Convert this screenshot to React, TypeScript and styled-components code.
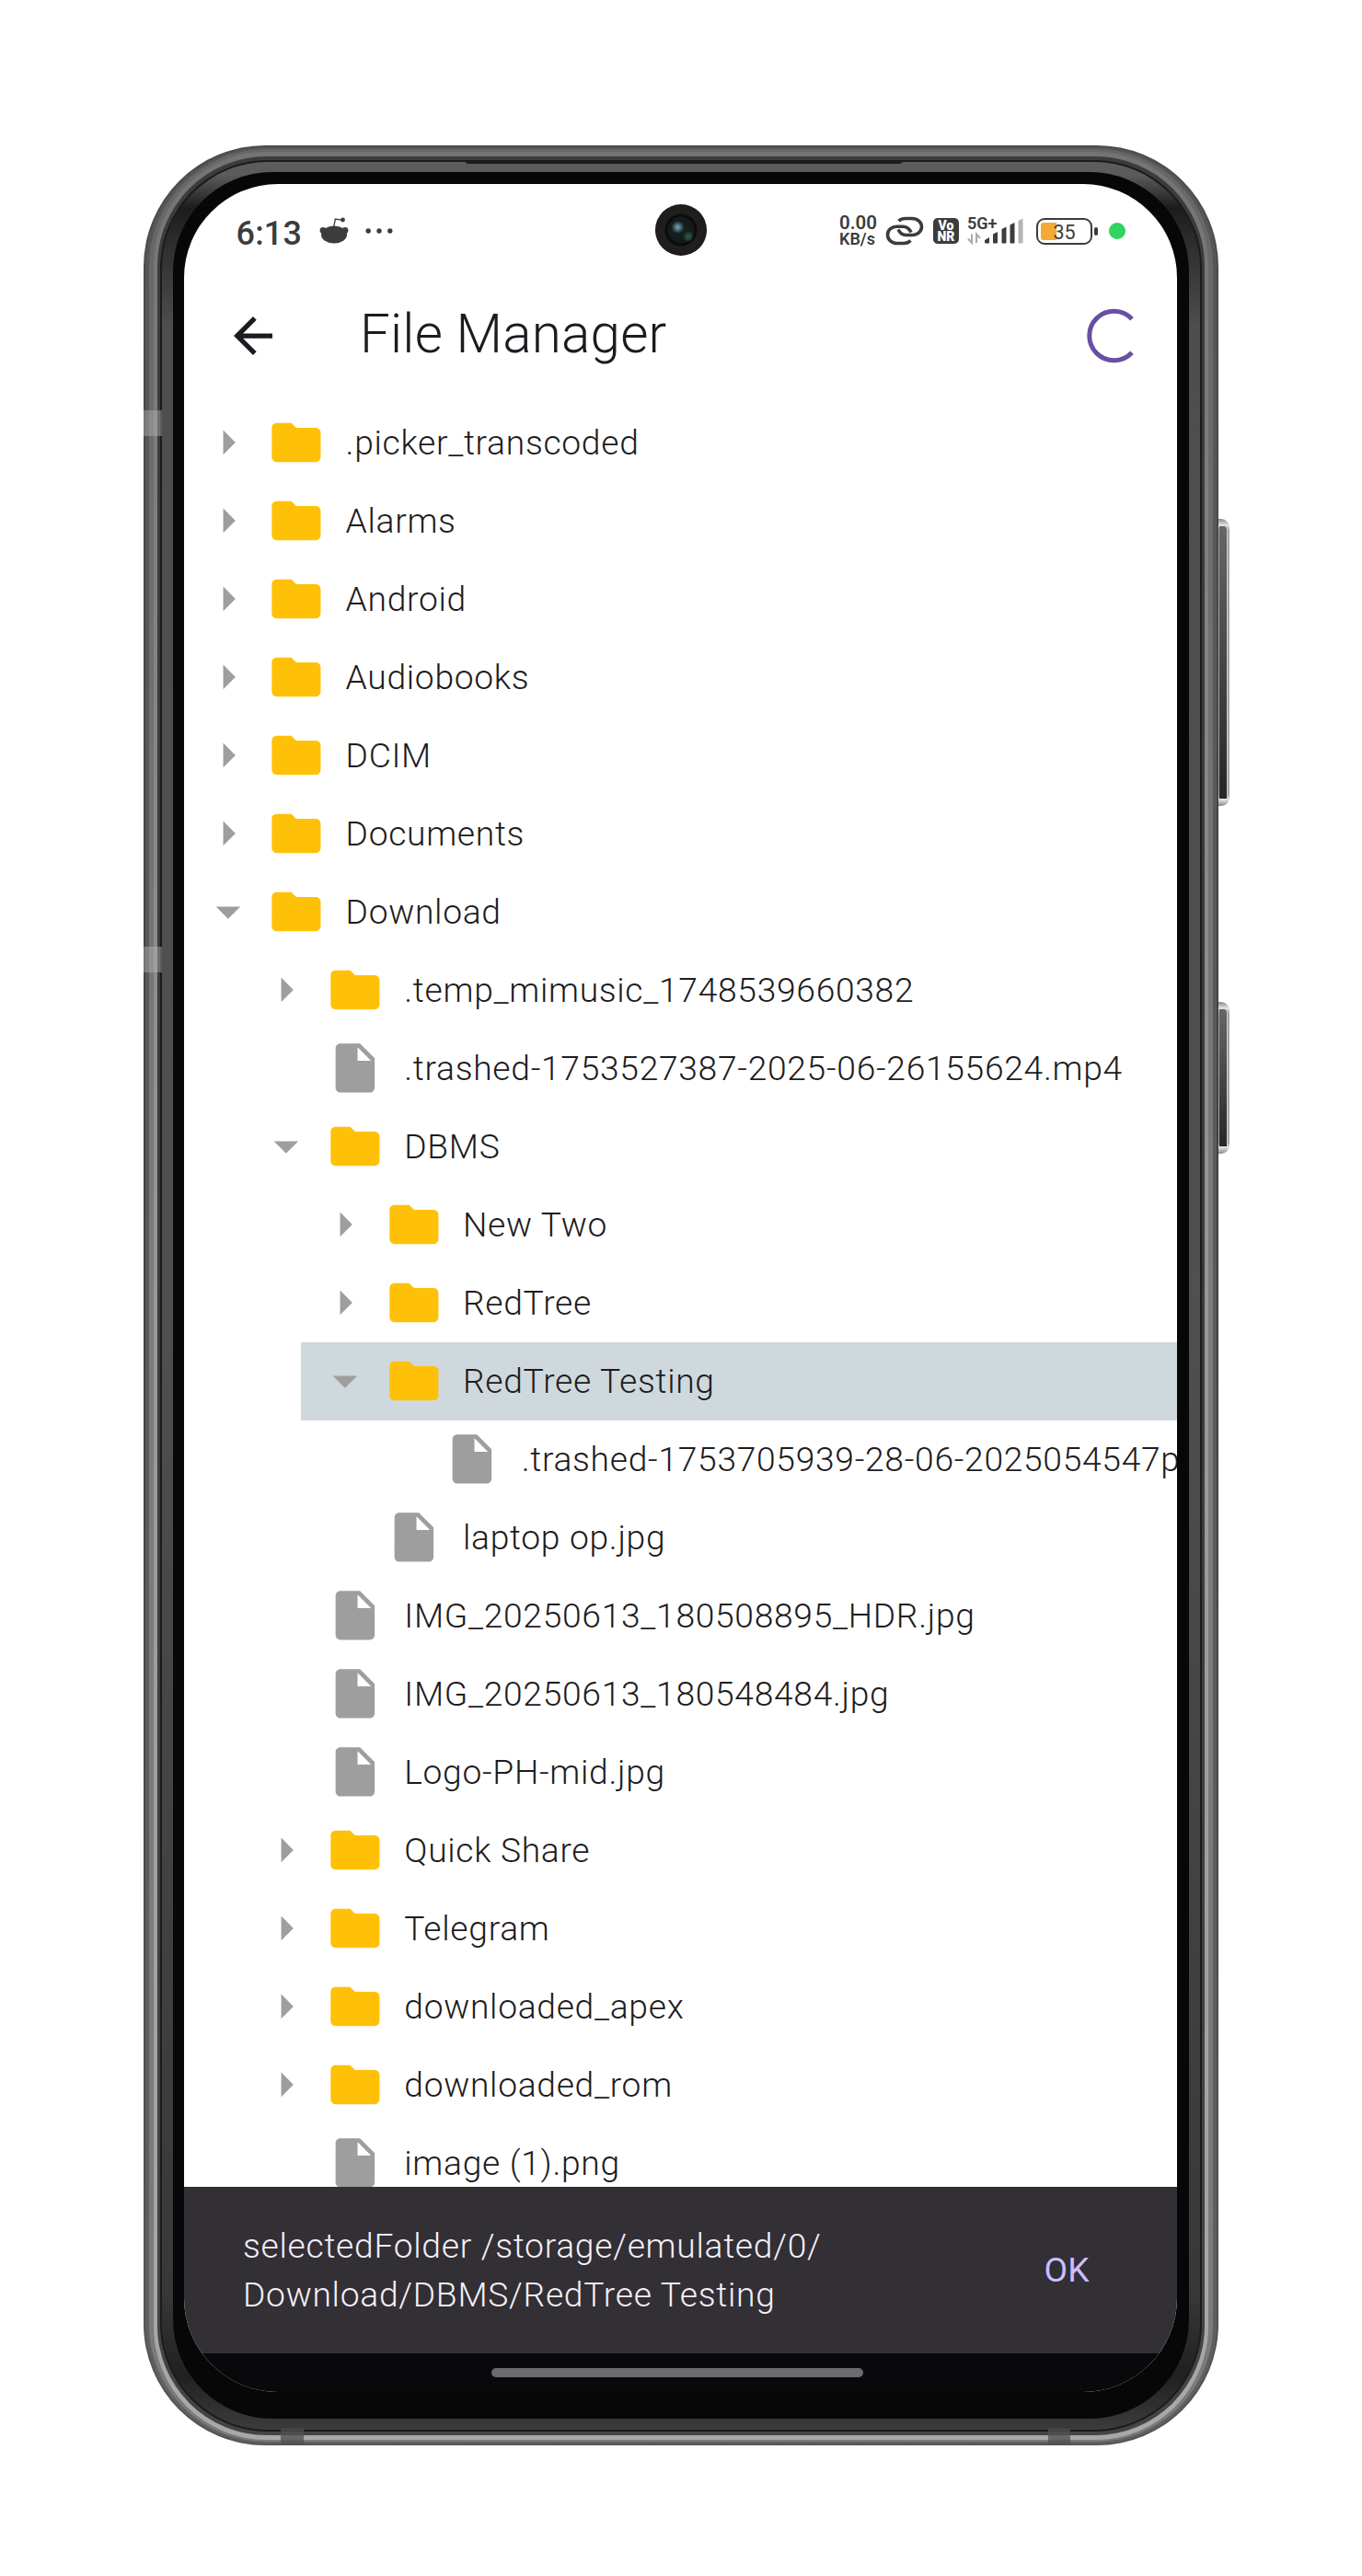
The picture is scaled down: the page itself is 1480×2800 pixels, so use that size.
import React from "react";
import styled, { createGlobalStyle } from "styled-components";

const Global = createGlobalStyle`
  body { margin: 0; background: #fff; }
  * { box-sizing: border-box; }
`;

const Stage = styled.main`
  width: 1480px;
  height: 2800px;
  padding: 158px 156px 0;
  background: #fff;
  font-family: Roboto, "Liberation Sans", sans-serif;
  overflow: hidden;
`;

const Phone = styled.div`
  position: relative;
  width: 1168px;
  height: 2500px;
`;

const Ring = styled.div<{ $pad: string; $radius: number; $fill: string }>`
  width: 100%;
  height: 100%;
  padding: ${(p) => p.$pad};
  border-radius: ${(p) => p.$radius}px;
  background: ${(p) => p.$fill};
`;

const SideKey = styled.div<{ $top: number; $height: number }>`
  position: absolute;
  left: 1168px;
  top: ${(p) => p.$top}px;
  width: 12px;
  height: ${(p) => p.$height}px;
  border-radius: 0 9px 9px 0;
  background: linear-gradient(#8a8a8a, #e4e4e4 7px, #a4a4a4 12px, #a4a4a4 calc(100% - 12px), #e4e4e4 calc(100% - 7px), #888);
  padding: 8px 2.5px 8px 1px;
`;

const KeyFace = styled.div`
  height: 100%;
  background: linear-gradient(#666, #262626);
  border-right: 1.5px solid #d0d0d0;
  border-radius: 0 4px 0 0;
`;

const Antenna = styled.div<{ $left: number; $top: number; $w: number; $h: number; $fill: string }>`
  position: absolute;
  left: ${(p) => p.$left}px;
  top: ${(p) => p.$top}px;
  width: ${(p) => p.$w}px;
  height: ${(p) => p.$h}px;
  background: ${(p) => p.$fill};
`;

const Speaker = styled.div`
  position: absolute;
  left: 350px;
  top: 16px;
  width: 474px;
  height: 4px;
  border-radius: 0 0 2px 2px;
  background: #1c1c1c;
`;

const Screen = styled.div`
  position: relative;
  width: 1079px;
  height: 2400px;
  border-radius: 102px;
  overflow: hidden;
  background: #fff;
  display: flex;
  flex-direction: column;
  color: #1d1b20;
`;

const StatusBar = styled.header`
  height: 100px;
  flex: none;
  display: flex;
  align-items: center;
  padding: 2px 56.5px 0 56.5px;
  color: #3c3c3c;
`;

const Clock = styled.span`
  width: 90px;
  font-size: 36px;
  line-height: 42px;
  font-weight: 500;
  letter-spacing: 0.2px;
  padding-top: 5px;
`;

const StatusRight = styled.div`
  margin-left: auto;
  display: flex;
  align-items: center;
`;

const Speed = styled.div`
  width: 50px;
  display: flex;
  flex-direction: column;
  font-weight: 600;
  white-space: nowrap;
`;

const SpeedLine = styled.span<{ $size: number }>`
  font-size: ${(p) => p.$size}px;
  line-height: 18px;
`;

const VoNr = styled.div`
  width: 28px;
  height: 28px;
  margin-left: 10px;
  border-radius: 5px;
  background: #3c3c3c;
  color: #fff;
  font-size: 14px;
  line-height: 12px;
  font-weight: 900;
  text-align: center;
  padding-top: 2px;
`;

const Network = styled.div`
  position: relative;
  width: 62px;
  height: 30px;
  margin-left: 9px;
`;

const NetLabel = styled.span`
  position: absolute;
  left: 0;
  top: -2px;
  font-size: 18px;
  line-height: 17px;
  font-weight: 600;
`;

const Battery = styled.div`
  position: relative;
  width: 61px;
  height: 29px;
  margin-left: 13px;
  border: 2.6px solid #3c3c3c;
  border-radius: 9px;
  padding: 3px;
`;

const Charge = styled.div`
  width: 17px;
  height: 100%;
  border-radius: 3px 0 0 3px;
  background: #f4a935;
`;

const Percent = styled.span`
  position: absolute;
  inset: 0;
  text-align: center;
  font-size: 21.5px;
  line-height: 27px;
`;

const BatteryTip = styled.div`
  width: 3.5px;
  height: 9px;
  margin-left: 2px;
  border-radius: 2px;
  background: #3c3c3c;
`;

const PrivacyDot = styled.div`
  width: 18px;
  height: 18px;
  margin-left: 12px;
  border-radius: 50%;
  background: #30d45f;
`;

const Camera = styled.div`
  position: absolute;
  left: 512px;
  top: 22px;
  width: 56px;
  height: 56px;
  border-radius: 50%;
  background:
    radial-gradient(circle at 24.5px 25px, #7fa9b8 0, #48707c 3px, transparent 7px),
    radial-gradient(circle at 36px 35px, #31584c 0, #24453b 3px, transparent 6px),
    radial-gradient(circle, #16211f 0, #121b1a 14px, #0a0a0a 15px, #0c0c0c 17px, #211f1e 18px, #1e1d1b 27px);
`;

const AppBar = styled.div`
  height: 138.5px;
  flex: none;
  display: flex;
  align-items: center;
  padding: 0 39.5px 9px 54px;
`;

const Title = styled.h1`
  margin: -3px auto 0 95px;
  font-size: 58.4px;
  line-height: 74px;
  font-weight: 300;
  letter-spacing: 0.2px;
`;

const Tree = styled.div`
  flex: 1;
  min-height: 0;
  overflow: hidden;
`;

const Row = styled.div<{ $level: number; $selected?: boolean }>`
  height: 85px;
  margin-left: ${(p) => p.$level * 63.7}px;
  padding-left: 15.8px;
  display: flex;
  align-items: center;
  background: ${(p) => (p.$selected ? "#cfd8dd" : "transparent")};
  white-space: nowrap;
`;

const Slot = styled.div<{ $gap: number }>`
  width: 63.75px;
  height: 63.75px;
  flex: none;
  margin-right: ${(p) => p.$gap}px;
  svg { display: block; width: 100%; height: 100%; }
`;

const Label = styled.span`
  font-size: 37.2px;
  line-height: 53px;
  font-weight: 300;
  letter-spacing: 0.7px;
`;

const Snackbar = styled.div`
  height: 181px;
  flex: none;
  display: flex;
  align-items: center;
  justify-content: space-between;
  padding: 0 95px 0 64px;
  background: #322f35;
`;

const Message = styled.p`
  margin: 0;
  font-size: 37.2px;
  line-height: 53px;
  font-weight: 300;
  letter-spacing: 0.72px;
  color: #f5eff7;
`;

const Action = styled.button`
  border: 0;
  padding: 0;
  background: none;
  font: 400 37.2px/53px Roboto, sans-serif;
  letter-spacing: 0.3px;
  color: #d0bcff;
`;

const NavBar = styled.div`
  height: 42px;
  flex: none;
  display: flex;
  justify-content: center;
  padding: 16px 8px 0 0;
  background: #09090b;
`;

const Handle = styled.div`
  width: 404px;
  height: 10px;
  border-radius: 5px;
  background: #6b6b6d;
`;

const Dots = styled.svg`
  margin-left: 18px;
`;

type Kind = "closed" | "open" | "file";
const items: { name: string; level: number; kind: Kind; selected?: boolean }[] = [
  { name: ".picker_transcoded", level: 0, kind: "closed" },
  { name: "Alarms", level: 0, kind: "closed" },
  { name: "Android", level: 0, kind: "closed" },
  { name: "Audiobooks", level: 0, kind: "closed" },
  { name: "DCIM", level: 0, kind: "closed" },
  { name: "Documents", level: 0, kind: "closed" },
  { name: "Download", level: 0, kind: "open" },
  { name: ".temp_mimusic_1748539660382", level: 1, kind: "closed" },
  { name: ".trashed-1753527387-2025-06-26155624.mp4", level: 1, kind: "file" },
  { name: "DBMS", level: 1, kind: "open" },
  { name: "New Two", level: 2, kind: "closed" },
  { name: "RedTree", level: 2, kind: "closed" },
  { name: "RedTree Testing", level: 2, kind: "open", selected: true },
  { name: ".trashed-1753705939-28-06-2025054547p", level: 3, kind: "file" },
  { name: "laptop op.jpg", level: 2, kind: "file" },
  { name: "IMG_20250613_180508895_HDR.jpg", level: 1, kind: "file" },
  { name: "IMG_20250613_180548484.jpg", level: 1, kind: "file" },
  { name: "Logo-PH-mid.jpg", level: 1, kind: "file" },
  { name: "Quick Share", level: 1, kind: "closed" },
  { name: "Telegram", level: 1, kind: "closed" },
  { name: "downloaded_apex", level: 1, kind: "closed" },
  { name: "downloaded_rom", level: 1, kind: "closed" },
  { name: "image (1).png", level: 1, kind: "file" },
];

const FOLDER = "M10 4H4c-1.1 0-1.99.9-1.99 2L2 18c0 1.1.9 2 2 2h16c1.1 0 2-.9 2-2V8c0-1.1-.9-2-2-2h-8l-2-2z";
const FILE = "M6 2c-1.1 0-1.99.9-1.99 2L4 20c0 1.1.89 2 1.99 2H18c1.1 0 2-.9 2-2V8l-6-6H6zm7 7V3.5L18.5 9H13z";

function TreeRow({ name, level, kind, selected }: (typeof items)[number]) {
  return (
    <Row $level={level} $selected={selected}>
      <Slot $gap={10.7}>
        {kind !== "file" && (
          <svg viewBox="0 0 24 24" fill="#9e9e9e">
            <path d={kind === "open" ? "M7 10l5 5 5-5z" : "M10 17l5-5-5-5z"} />
          </svg>
        )}
      </Slot>
      <Slot $gap={21.6}>
        <svg viewBox="0 0 24 24" fill={kind === "file" ? "#9e9e9e" : "#ffc107"}>
          <path d={kind === "file" ? FILE : FOLDER} />
        </svg>
      </Slot>
      <Label>{name}</Label>
    </Row>
  );
}

const RedditIcon = () => (
  <svg width="32" height="30" viewBox="0 0 32 30" fill="#3c3c3c">
    <ellipse cx="16" cy="19" rx="14" ry="9.6" />
    <circle cx="4" cy="14.5" r="3.4" />
    <circle cx="28" cy="14.5" r="3.4" />
    <path d="M15.8 10l1.6-8 7 1.2" fill="none" stroke="#3c3c3c" strokeWidth="1.3" />
    <circle cx="25.5" cy="3" r="2.4" />
  </svg>
);

const DotsIcon = () => (
  <Dots width="30" height="8" viewBox="0 0 30 8" fill="#3c3c3c">
    <circle cx="3.2" cy="4" r="2.7" />
    <circle cx="15" cy="4" r="2.7" />
    <circle cx="26.8" cy="4" r="2.7" />
  </Dots>
);

const LinkIcon = () => (
  <svg width="42" height="32" viewBox="0 0 42 32" fill="none" stroke="#3c3c3c" strokeWidth="3.6">
    <path d="M14.5 5.2C17 3 19.5 2.500 22 2.500H29C35 2.500 39.500 6.500 39.500 11.500S35 20.500 29 20.500H23C19 20.500 16 18.500 14 14.500" />
    <path d="M27.500 26.500C25 29 22.500 29.500 20 29.500H13C7 29.500 2.500 25.500 2.500 20.200S7 11.200 13 11.200H19C23 11.200 26 13.500 28 17.500" />
  </svg>
);

const SignalIcon = () => (
  <svg width="62" height="30" viewBox="0 0 62 30" fill="#3c3c3c">
    <g stroke="#a9a9a9" strokeWidth="2" fill="none">
      <path d="M5 18.500v9.500l-4-4.500M10 28v-9.500l4 4.500" />
    </g>
    <path d="M19 25l5-3v6.500h-4q-1 0-1-1z" />
    <path d="M28 18.500l5-2.500v11.500q0 1-1 1h-3q-1 0-1-1z" />
    <path d="M37.500 13l5-2.500v17q0 1-1 1h-3q-1 0-1-1z" />
    <path d="M46.500 8.500l5-2.500v21.500q0 1-1 1h-3q-1 0-1-1z" />
    <path d="M55.500 4l5-2.500v26q0 1-1 1h-3q-1 0-1-1z" fill="#b4b4b4" />
  </svg>
);

const BackIcon = () => (
  <svg width="42" height="44" viewBox="4 4 16 16" fill="#1d1b20">
    <path d="M20 11H7.830l5.590-5.590L12 4l-8 8 8 8 1.410-1.410L7.830 13H20v-2z" />
  </svg>
);

const Spinner = () => (
  <svg width="60" height="60" viewBox="0 0 60 60" fill="none" stroke="#6750a4" strokeWidth="5">
    <path d="M50 11.800A26.700 26.700 0 1 0 50 48.200" />
  </svg>
);

const rings: { pad: string; radius: number; fill: string }[] = [
  { pad: "2px", radius: 132, fill: "linear-gradient(#4c4c4c, #404040 50%, #555)" },
  { pad: "2px 4px", radius: 130, fill: "linear-gradient(#565656, #5a5a5a 50%, #606060)" },
  { pad: "3px 5px 2px", radius: 127, fill: "linear-gradient(#666, #7c7c7c 50%, #7a7a7a)" },
  { pad: "5px 4px", radius: 123, fill: "linear-gradient(#747474, #979797 50%, #a8a8a8)" },
  { pad: "4px 3px", radius: 119, fill: "linear-gradient(#3c3c3c, #3b3b3b 50%, #444)" },
  { pad: "2px", radius: 117, fill: "#1b1b1b" },
  {
    pad: "11px 12px 12px",
    radius: 115,
    fill: "linear-gradient(#5c5c5c, #5c5c5c 14px, #1c1c1c 50px, #2a2a2a 80px, #4e4e4e 180px, #505050 50%, #383838 94%, #202020 calc(100% - 60px), #3c3c3c)",
  },
];

function Bezel({ index, children }: { index: number; children: React.ReactNode }) {
  if (index === rings.length) return <>{children}</>;
  const ring = rings[index];
  return (
    <Ring $pad={ring.pad} $radius={ring.radius} $fill={ring.fill}>
      <Bezel index={index + 1}>{children}</Bezel>
    </Ring>
  );
}

export default function App() {
  return (
    <Stage>
      <Global />
      <Phone>
        <SideKey $top={406} $height={312}>
          <KeyFace />
        </SideKey>
        <SideKey $top={931} $height={165}>
          <KeyFace />
        </SideKey>
        <Bezel index={0}>
          <Ring $pad="13px 12px" $radius={108} $fill="#070707">
            <Screen>
              <StatusBar>
                <Clock>6:13</Clock>
                <RedditIcon />
                <DotsIcon />
                <StatusRight>
                  <Speed>
                    <SpeedLine $size={20.5}>0.00</SpeedLine>
                    <SpeedLine $size={18}>KB/s</SpeedLine>
                  </Speed>
                  <LinkIcon />
                  <VoNr>
                    Vo
                    <br />
                    NR
                  </VoNr>
                  <Network>
                    <SignalIcon />
                    <NetLabel>5G+</NetLabel>
                  </Network>
                  <Battery>
                    <Charge />
                    <Percent>35</Percent>
                  </Battery>
                  <BatteryTip />
                  <PrivacyDot />
                </StatusRight>
              </StatusBar>
              <Camera />
              <AppBar>
                <BackIcon />
                <Title>File Manager</Title>
                <Spinner />
              </AppBar>
              <Tree>
                {items.map((item) => (
                  <TreeRow key={item.name} {...item} />
                ))}
              </Tree>
              <Snackbar>
                <Message>
                  selectedFolder /storage/emulated/0/
                  <br />
                  Download/DBMS/RedTree Testing
                </Message>
                <Action>OK</Action>
              </Snackbar>
              <NavBar>
                <Handle />
              </NavBar>
            </Screen>
          </Ring>
        </Bezel>
        <Speaker />
        <Antenna $left={0} $top={288} $w={20} $h={28} $fill="rgba(190,190,190,.4)" />
        <Antenna $left={0} $top={871} $w={20} $h={28} $fill="rgba(190,190,190,.4)" />
        <Antenna $left={149} $top={2482} $w={25} $h={17} $fill="rgba(80,80,80,.75)" />
        <Antenna $left={983} $top={2482} $w={24} $h={17} $fill="rgba(80,80,80,.75)" />
      </Phone>
    </Stage>
  );
}
